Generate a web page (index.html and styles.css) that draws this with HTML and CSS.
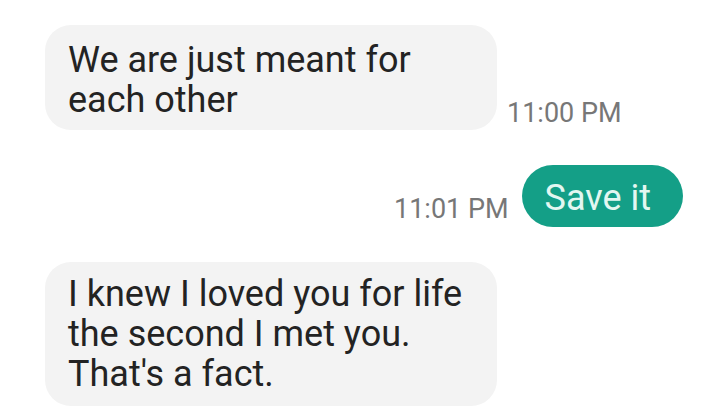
FILE: index.html
```html
<!DOCTYPE html>
<html>
<head lang="en">
    <meta charset="UTF-8">
    <title>chat</title>
    <link rel="stylesheet" href="styles.css">
</head>
<body>
<main class="thread">
    <div class="row in">
        <div class="bubble first">We are just meant for each other</div>
        <span class="time">11:00 PM</span>
    </div>
    <div class="row out">
        <span class="time">11:01 PM</span>
        <div class="bubble mine">Save it</div>
    </div>
    <div class="row in">
        <div class="bubble last">I knew I loved you for life the second I met you. That's a fact.</div>
    </div>
</main>
</body>
</html>
```

FILE: styles.css
```css
body{
    margin: 0;
    background-color: #fff;
    font-family: Roboto, "Liberation Sans", sans-serif;
}
.thread{
    display: flex;
    flex-direction: column;
    gap: 35px;
    padding: 25px 36px 0 45px;
}
.row{
    display: flex;
    align-items: flex-end;
}
.row.out{
    justify-content: flex-end;
    gap: 13px;
}
.row.in{
    gap: 10px;
}
.bubble{
    max-width: 452px;
    box-sizing: border-box;
    padding: 12px 23px;
    border-radius: 26px;
    background-color: #f3f3f3;
    color: #232323;
    font-size: 36px;
    line-height: 40px;
}
.bubble.first{
    padding: 15px 23px 10px;
}
.bubble.mine{
    padding: 13px 32px 9px 23px;
    border-radius: 31px;
    background-color: #149f87;
    color: #e3f7f1;
}
.time{
    color: #777;
    font-size: 27px;
    line-height: 30px;
}
.row.in .time{
    margin-bottom: 2px;
}
.row.out .time{
    margin-bottom: 3px;
}
```
